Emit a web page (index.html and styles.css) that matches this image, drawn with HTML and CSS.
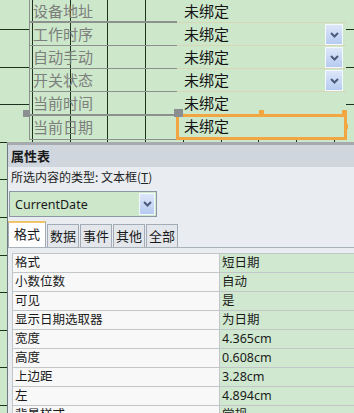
FILE: index.html
```html
<!DOCTYPE html>
<html lang="zh-CN">
<head>
    <meta charset="UTF-8">
    <meta name="viewport" content="width=device-width, initial-scale=1.0">
    <title>窗体设计 - 属性表</title>
    <link rel="stylesheet" href="styles.css">
</head>
<body>
    <div class="design">
        <div class="form">
            <div class="label first">设备地址</div>
            <div class="field first">未绑定</div>

            <div class="label">工作时序</div>
            <div class="field">未绑定<span class="drop"><svg width="9" height="6" viewBox="0 0 9 6"><polyline points="1,1 4.5,4.5 8,1" fill="none" stroke="#4c5a7c" stroke-width="2"/></svg></span></div>

            <div class="label">自动手动</div>
            <div class="field">未绑定<span class="drop"><svg width="9" height="6" viewBox="0 0 9 6"><polyline points="1,1 4.5,4.5 8,1" fill="none" stroke="#4c5a7c" stroke-width="2"/></svg></span></div>

            <div class="label">开关状态</div>
            <div class="field">未绑定<span class="drop"><svg width="9" height="6" viewBox="0 0 9 6"><polyline points="1,1 4.5,4.5 8,1" fill="none" stroke="#4c5a7c" stroke-width="2"/></svg></span></div>

            <div class="label">当前时间</div>
            <div class="field">未绑定</div>

            <div class="label selected">当前日期</div>
            <div class="field">未绑定</div>
        </div>

        <!-- selection of the CurrentDate text box -->
        <div class="sel-box"></div>
        <div class="handle handle-label"></div>
        <div class="handle handle-move"></div>
        <div class="dot dot-top"></div>
        <div class="dot dot-corner"></div>
        <div class="dot dot-side"></div>
    </div>

    <div class="sheet">
        <div class="sheet-title">属性表</div>
        <div class="sel-type">所选内容的类型: 文本框(<u>T</u>)</div>

        <div class="combo">
            <span class="combo-text">CurrentDate</span>
            <span class="combo-btn"><svg width="9" height="6" viewBox="0 0 9 6"><polyline points="1,1 4.5,4.5 8,1" fill="none" stroke="#4c5a7c" stroke-width="2"/></svg></span>
        </div>

        <div class="tabs">
            <span class="tab active">格式</span>
            <span class="tab">数据</span>
            <span class="tab">事件</span>
            <span class="tab">其他</span>
            <span class="tab">全部</span>
        </div>

        <table class="props">
            <tr><td>格式</td><td>短日期</td></tr>
            <tr><td>小数位数</td><td>自动</td></tr>
            <tr><td>可见</td><td>是</td></tr>
            <tr><td>显示日期选取器</td><td>为日期</td></tr>
            <tr><td>宽度</td><td>4.365cm</td></tr>
            <tr><td>高度</td><td>0.608cm</td></tr>
            <tr><td>上边距</td><td>3.28cm</td></tr>
            <tr><td>左</td><td>4.894cm</td></tr>
            <tr><td>背景样式</td><td>常规</td></tr>
        </table>
    </div>
</body>
</html>
```

FILE: styles.css
```css
body {
    margin: 0;
    width: 354px;
    height: 413px;
    overflow: hidden;
    font-family: "Noto Sans", "Noto Sans CJK SC", sans-serif;
    background-color: #cde7cb;
    /* design grid of the form */
    background-image:
        repeating-linear-gradient(to bottom, transparent 0 29px, #1d321d 29px 30px, transparent 30px 37.6px),
        repeating-linear-gradient(to right, transparent 0 32px, #1d321d 32px 33px, transparent 33px 37.7px);
}

.design {
    position: relative;
    height: 142px;
}

.form {
    margin-left: 29px;
    width: 317px;
    display: grid;
    grid-template-columns: 148px 169px;
    grid-template-rows: 23px 23px 23px 23px 23px 25px;
}

.label {
    box-sizing: border-box;
    padding-left: 3px;
    border-left: 1px solid #8d918d;
    border-bottom: 1px solid #8d918d;
    font-family: "Noto Sans CJK SC", sans-serif;
    font-size: 15px;
    line-height: 21px;
    color: #7c7f7c;
    background-color: #cde7cb;
    background-image: repeating-linear-gradient(to right, transparent 0 2px, #1d321d 2px 3px, transparent 3px 37.7px);
}
.label.first {
    border-bottom: 2px solid #8d918d;
}
.label.selected {
    border-top: 1px solid #8d918d;
}

.field {
    position: relative;
    box-sizing: border-box;
    padding-left: 7px;
    border-bottom: 1px solid #d9d6b6;
    background-color: #cde7cb;
    font-family: "Noto Sans CJK SC", sans-serif;
    font-size: 15px;
    line-height: 22px;
    color: #141414;
}

.drop {
    position: absolute;
    right: 3px;
    top: 1px;
    width: 16px;
    height: 19px;
    display: flex;
    align-items: center;
    justify-content: center;
    border: 1px solid #f4f8ff;
    background: linear-gradient(#dde7f9, #b6cbf1);
}

.sel-box {
    position: absolute;
    left: 176px;
    top: 114px;
    width: 165px;
    height: 20px;
    border: 3px solid #f2a641;
}
.handle {
    position: absolute;
    background: #8c8f92;
}
.handle-label {
    left: 23px;
    top: 110px;
    width: 7px;
    height: 7px;
}
.handle-move {
    left: 174px;
    top: 109px;
    width: 9px;
    height: 8px;
}
.dot {
    position: absolute;
    width: 5px;
    height: 4px;
    background: #f2a641;
}
.dot-top { left: 259px; top: 110px; }
.dot-corner { left: 342px; top: 110px; }
.dot-side { left: 345px; top: 124px; width: 3px; height: 5px; }

.sheet {
    margin-left: 7px;
    height: 271px;
    border-left: 1px solid #6f7a84;
    border-top: 3px solid #a6aaae;
    background-color: #e9edf1;
    color: #1a1a1a;
}

.sheet-title {
    height: 22px;
    padding-left: 3px;
    background-color: #cfd6dd;
    font-family: "Noto Sans CJK SC", sans-serif;
    font-weight: bold;
    font-size: 13px;
    line-height: 22px;
}

.sel-type {
    padding-left: 3px;
    font-family: "Noto Sans CJK SC", sans-serif;
    font-size: 12px;
    line-height: 20px;
    color: #222;
}

.combo {
    margin: 4px 0 0 1px;
    width: 148px;
    height: 26px;
    box-sizing: border-box;
    display: flex;
    align-items: center;
    justify-content: space-between;
    border: 1px solid #8b97a4;
    background-color: #cde7cb;
}
.combo-text {
    padding-left: 5px;
    font-size: 12.5px;
}
.combo-btn {
    width: 16px;
    height: 22px;
    margin-right: 1px;
    display: flex;
    align-items: center;
    justify-content: center;
    border: 1px solid #f4f8ff;
    box-sizing: border-box;
    background: linear-gradient(#dde7f9, #b6cbf1);
}

.tabs {
    margin-top: 5px;
    display: flex;
    align-items: flex-end;
    height: 25px;
    border-bottom: 1px solid #a9b1b9;
}
.tab {
    box-sizing: border-box;
    height: 23px;
    padding: 0 2px;
    margin-right: 1px;
    border: 1px solid #a3acb5;
    border-bottom: none;
    background-color: #e3e7ec;
    font-family: "Noto Sans CJK SC", sans-serif;
    font-size: 13px;
    line-height: 21px;
}
.tab.active {
    height: 26px;
    padding: 0 5px;
    border-top: 2px solid #f0c46a;
    background-color: #fff;
}

.props {
    margin: 5px 0 0 4px;
    width: 400px;
    border-collapse: collapse;
    font-family: "Noto Sans", "Noto Sans CJK SC", sans-serif;
    font-size: 12.5px;
}
.props td {
    height: 18px;
    padding: 0 0 0 2px;
    border: 1px solid #c3c6c9;
    line-height: 18px;
    white-space: nowrap;
}
.props td:first-child {
    width: 204px;
    background-color: #f8f8f8;
}
.props td:last-child {
    background-color: #d0e8cf;
}
```
